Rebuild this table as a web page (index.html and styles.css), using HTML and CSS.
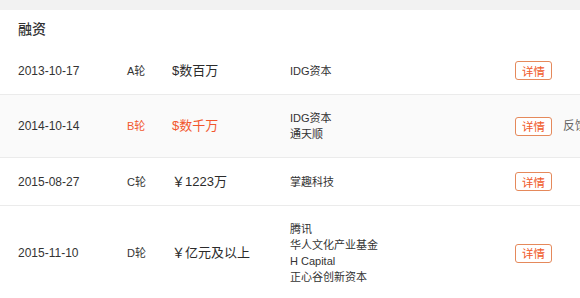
FILE: index.html
```html
<!DOCTYPE html>
<html lang="zh">
<head>
<meta charset="utf-8">
<link rel="stylesheet" href="styles.css">
</head>
<body>
<div class="panel">
  <div class="title">融资</div>
  <div class="row">
    <div class="date">2013-10-17</div>
    <div class="round">A轮</div>
    <div class="amount">$数百万</div>
    <div class="investors"><div>IDG资本</div></div>
    <div><span class="btn">详情</span></div>
    <div class="fb"></div>
  </div>
  <div class="row active">
    <div class="date">2014-10-14</div>
    <div class="round">B轮</div>
    <div class="amount">$数千万</div>
    <div class="investors"><div>IDG资本</div><div>通天顺</div></div>
    <div><span class="btn">详情</span></div>
    <div class="fb">反馈</div>
  </div>
  <div class="row">
    <div class="date">2015-08-27</div>
    <div class="round">C轮</div>
    <div class="amount">￥1223万</div>
    <div class="investors"><div>掌趣科技</div></div>
    <div><span class="btn">详情</span></div>
    <div class="fb"></div>
  </div>
  <div class="row last">
    <div class="date">2015-11-10</div>
    <div class="round">D轮</div>
    <div class="amount">￥亿元及以上</div>
    <div class="investors"><div>腾讯</div><div>华人文化产业基金</div><div>H Capital</div><div>正心谷创新资本</div></div>
    <div><span class="btn">详情</span></div>
    <div class="fb"></div>
  </div>
</div>
</body>
</html>
```

FILE: styles.css
```css
html, body {
  margin: 0;
  padding: 0;
}
body {
  background: #f2f2f2;
  font-family: "Liberation Sans", Arial, "Noto Sans CJK SC", sans-serif;
  color: #333;
  width: 580px;
  height: 298px;
  overflow: hidden;
}
.panel {
  margin-top: 10px;
  background: #fff;
  width: 620px;
}
.title {
  padding: 9px 18px 8px;
  font-size: 14px;
  line-height: 20px;
  color: #333;
  font-weight: 500;
}
.row {
  display: grid;
  grid-template-columns: 109px 45px 118px 225px 48px 60px;
  align-items: center;
  padding: 14px 0 14px 18px;
  border-bottom: 1px solid #ebebeb;
}
.row.active {
  background: #fafafa;
  padding-top: 15px;
  padding-bottom: 15px;
}
.row.last {
  padding-top: 15px;
}
.date {
  font-size: 12px;
  line-height: 16px;
  color: #333;
}
.round {
  font-size: 11px;
  line-height: 16px;
  color: #333;
}
.amount {
  font-size: 13px;
  line-height: 16px;
  color: #2b2b2b;
}
.active .round,
.active .amount {
  color: #f2572d;
}
.investors {
  font-size: 11px;
  line-height: 16px;
  color: #333;
}
.btn {
  display: flex;
  align-items: center;
  justify-content: center;
  box-sizing: border-box;
  width: 37px;
  height: 19px;
  border: 1px solid #e5895b;
  border-radius: 3px;
  color: #f05a2a;
  font-size: 11.5px;
  background: #fff;
}
.fb {
  font-size: 12px;
  line-height: 16px;
  color: #666;
}
```
